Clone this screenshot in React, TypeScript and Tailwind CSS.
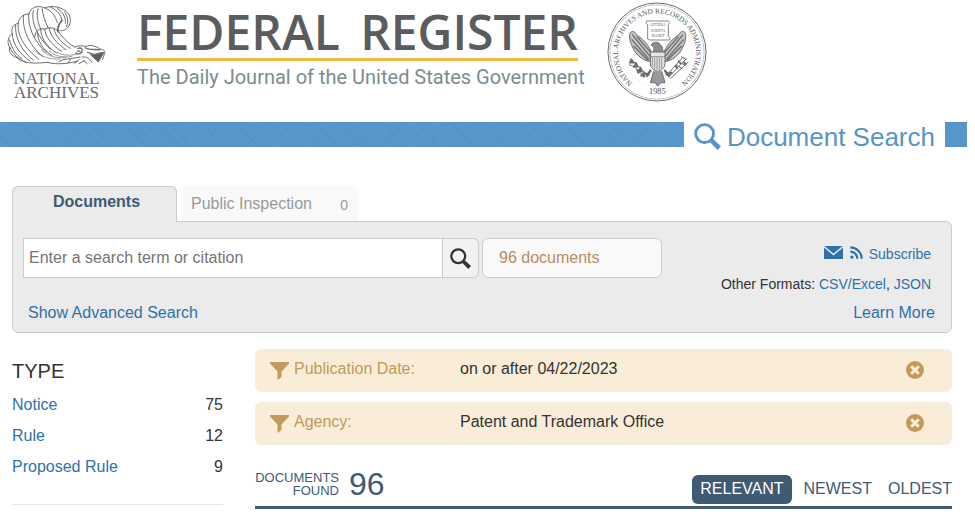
import React, { useState } from "react";

const types = [
  { label: "Notice", count: 75 },
  { label: "Rule", count: 12 },
  { label: "Proposed Rule", count: 9 },
];

const sortOptions = ["RELEVANT", "NEWEST", "OLDEST"];

const SearchIcon = ({ className }: { className?: string }) => (
  <svg viewBox="0 0 26 26" className={className} aria-hidden="true">
    <circle cx="10.2" cy="10.2" r="8.6" fill="none" stroke="currentColor" strokeWidth="2.8" />
    <path d="M15.2 18.2 18.2 15.2 26 22.4 22.6 26Z" fill="currentColor" />
  </svg>
);

const EagleLogo = () => (
  <svg viewBox="18 15 303 184" className="w-[101px] h-[61px]" fill="none" stroke="#6b6c6e" strokeWidth="3" strokeLinecap="round" aria-hidden="true">
    <path d="M86 42C90 22 114 14 134 24C158 14 190 22 206 42C216 58 212 82 194 90C186 94 176 92 176 92" />
    <path d="M134 24C152 30 166 46 172 68" />
    <path d="M152 22C172 30 184 46 186 62" />
    <path d="M172 26C190 36 198 52 196 70" />
    <path d="M194 36C204 50 206 64 200 80" />
    <path d="M186 62C178 70 172 82 174 96" strokeWidth="5" />
    <path d="M86 42C68 42 56 54 54 70C38 74 32 86 36 102C22 112 20 128 28 142C24 158 34 168 50 174" />
    <path d="M86 42C82 74 98 122 138 158" />
    <path d="M100 32C92 60 106 104 150 148" />
    <path d="M114 26C108 44 112 66 122 88" />
    <path d="M126 26C128 44 134 62 144 84" />
    <path d="M70 46C66 84 82 132 128 170" />
    <path d="M54 70C50 104 72 146 116 178" />
    <path d="M46 76C44 112 62 152 100 182" />
    <path d="M36 102C38 132 56 162 90 184" />
    <path d="M28 142C38 164 54 178 76 188" />
    <path d="M28 120C34 146 46 164 66 178" />
    <path d="M50 174C68 192 104 192 142 188" />
    <path d="M104 112C104 92 118 84 134 88C152 78 172 86 180 102C196 120 206 134 226 142" />
    <path d="M112 96C112 122 126 148 156 168" />
    <path d="M122 88C122 112 138 140 170 160" />
    <path d="M134 88C136 110 152 134 184 154" />
    <path d="M148 86C150 106 168 130 198 150" />
    <path d="M162 88C166 108 182 128 212 146" />
    <path d="M102 150C118 170 150 180 180 178M124 150C144 170 168 176 198 174M148 154C166 170 188 174 216 170M172 158C190 168 206 168 230 164" strokeWidth="2" />
    <path d="M142 188C168 196 206 192 232 184M176 186C190 176 214 178 240 172M204 190L212 178M222 192L238 180M238 192L254 182" />
    <path d="M226 142C234 136 250 138 258 140C270 134 290 138 300 148C312 148 318 154 314 164L308 180" />
    <path d="M234 146C244 142 250 148 246 156C240 164 232 164 228 160M232 154H240" strokeWidth="4" />
    <path d="M256 144C268 152 286 148 300 150" strokeWidth="4" />
    <path d="M262 158L286 164C294 160 302 158 312 158" />
    <path d="M274 166L312 160L296 186Z" fill="#5b5c5e" />
    <path d="M246 172C262 170 270 176 276 188M252 184L262 192M268 158L274 166" />
  </svg>
);

const Seal = () => (
  <svg viewBox="0 0 300 300" className="size-[100px]" fill="none" stroke="#6b6c6e" aria-label="National Archives and Records Administration seal">
    <defs>
      <path id="seal-top" d="M94 254A117 117 0 1 1 206 254" />
    </defs>
    <circle cx="150" cy="150" r="147" strokeWidth="3" />
    <circle cx="150" cy="150" r="141" strokeWidth="2.5" strokeDasharray="2 2" />
    <circle cx="150" cy="150" r="103" strokeWidth="1.5" strokeDasharray="2 3" opacity=".35" />
    <text fill="#58595b" stroke="none" fontSize="22" fontFamily="Liberation Serif, serif">
      <textPath href="#seal-top" startOffset="50%" textAnchor="middle">
        NATIONAL ARCHIVES AND RECORDS ADMINISTRATION
      </textPath>
    </text>
    <text x="151" y="277" fill="#58595b" stroke="none" fontSize="25" textAnchor="middle" fontFamily="Liberation Serif, serif">1985</text>
    <path d="M120 57H184Q192 61 184 68V103Q192 108 188 114H128Q118 112 122 104V68Q114 66 120 57Z" fill="#fff" strokeWidth="2.5" />
    <g fill="#58595b" stroke="none" fontSize="11" textAnchor="middle" fontFamily="Liberation Serif, serif">
      <text x="153" y="73">LITTERA</text>
      <text x="153" y="89">SCRIPTA</text>
      <text x="153" y="105">MANET</text>
    </g>
    <g strokeWidth="3">
      <path d="M68 98C70 84 84 86 88 98C104 108 122 124 132 148L130 178C110 178 86 158 78 138C72 126 66 112 68 98Z" fill="#c4c5c6" />
      <path d="M236 98C234 84 220 86 216 98C200 108 182 124 172 148L174 178C194 178 218 158 226 138C232 126 238 112 236 98Z" fill="#c4c5c6" />
      <path d="M76 98L130 164M74 112L126 172M80 132L124 176M90 104L132 152M228 98L174 164M230 112L178 172M224 132L180 176M214 104L172 152" strokeWidth="4" />
      <path d="M138 150C144 140 140 132 132 130C138 118 154 118 160 128C168 134 166 144 170 152" fill="#8b8c8e" />
      <path d="M130 150H174V184C174 198 162 206 152 210C142 206 130 198 130 184Z" fill="#e5e5e5" />
      <path d="M136 166V194M143 166V202M150 166V208M157 166V206M164 166V200M130 164H174" strokeWidth="2" />
      <path d="M132 204L118 224M172 204L188 224M128 218L112 214M176 218L196 212" strokeWidth="7" />
      <path d="M140 208L130 242H144L152 252L162 242H174L164 208" fill="#98999b" />
      <path d="M68 172C86 182 104 200 122 224M66 188C84 192 100 210 112 228" />
      <path d="M72 170l8 12-14 0M86 180l6 14-14 0M100 194l4 14-14 0M88 204l14 2-10 8M110 208l2 14-12-2" fill="#77787a" strokeWidth="5" />
      <path d="M184 226L238 170M180 218L228 166M190 230L244 180M222 164L238 172M218 182L236 190M206 188L226 200" strokeWidth="3" />
      <path d="M214 176l8 10M204 190l8 10M230 180l8 8" strokeWidth="6" />
    </g>
  </svg>
);

const MailIcon = () => (
  <svg viewBox="0 0 19 13" className="w-[19px] h-[13px]" aria-hidden="true">
    <path d="M0 0H19V13H0Z" fill="currentColor" />
    <path d="M0 .6 9.5 8.6 19 .6" fill="none" stroke="#ebebeb" strokeWidth="1.4" />
  </svg>
);

const RssIcon = () => (
  <svg viewBox="0 0 13 13" className="size-[13px]" fill="none" stroke="currentColor" strokeWidth="2.2" aria-hidden="true">
    <circle cx="1.9" cy="11.1" r="1.7" fill="currentColor" stroke="none" />
    <path d="M.3 5.6A7 7 0 0 1 7.3 12.8M.3 1.4A11.4 11.4 0 0 1 11.7 12.8" />
  </svg>
);

const FilterIcon = () => (
  <svg viewBox="0 0 19 18" className="w-[19px] h-[18px] shrink-0" fill="currentColor" aria-hidden="true">
    <path d="M0 0H19V1.5L11.5 9.5V15L7.5 18V9.5L0 1.5Z" />
  </svg>
);

const RemoveIcon = () => (
  <svg viewBox="0 0 18 18" className="size-[18px]" aria-hidden="true">
    <circle cx="9" cy="9" r="9" fill="currentColor" />
    <path d="M5.2 5.2 12.8 12.8M12.8 5.2 5.2 12.8" stroke="#f9edd7" strokeWidth="3" />
  </svg>
);

const FilterRow = ({ label, value }: { label: string; value: string }) => (
  <div className="flex items-center h-[43px] rounded-md bg-[#f9edd7] pl-[15px] pr-7 pb-0.5">
    <div className="flex items-start w-[190px] text-[#c29b5b]">
      <span className="pt-[3px]">
        <FilterIcon />
      </span>
      <span className="pl-[5px] pb-0.5">{label}</span>
    </div>
    <span className="flex-1 pb-0.5">{value}</span>
    <button type="button" aria-label={`Remove ${label}`} className="text-[#c29b5b]">
      <RemoveIcon />
    </button>
  </div>
);

const App = () => {
  const [term, setTerm] = useState("");
  const [sort, setSort] = useState("RELEVANT");

  return (
    <div className="bg-white text-[#333] text-base leading-5 font-['Liberation_Sans',Arial,sans-serif]">
      <header className="flex items-start h-[122px] pl-1.5">
        <a href="#" className="flex flex-col items-center w-[101px] pt-[5px] text-[17px] leading-[14px] text-[#6b6c6e] font-['Liberation_Serif',serif]">
          <EagleLogo />
          <span className="pt-1.5">NATIONAL</span>
          <span>ARCHIVES</span>
        </a>
        <a href="#" className="flex flex-col w-[441px] ml-[30px] pt-2">
          <span className="flex justify-between border-b-3 border-[#f3b73e] pb-0.5 text-[48px] leading-[48px] font-semibold text-[#5b5c5e] font-['Open_Sans',sans-serif]">
            <span>FEDERAL</span>
            <span>REGISTER</span>
          </span>
          <span className="pt-1 text-xl leading-6 text-[#7a8c91] whitespace-nowrap font-['Roboto',sans-serif]">
            The Daily Journal of the United States Government
          </span>
        </a>
        <div className="ml-[29px] pt-[2px]">
          <Seal />
        </div>
      </header>

      <div className="flex justify-end items-center h-[25px] mr-2 pr-[22px] bg-[#5897cc] bg-[repeating-linear-gradient(45deg,transparent_0_7px,#4a88bf59_7px_8px),repeating-linear-gradient(-45deg,transparent_0_15px,#4a88bf33_15px_16px)]">
        <h1 className="flex items-center gap-1.5 bg-white px-2.5 pt-1.5 pb-0.5 text-[26px] leading-8 text-[#5694ca]">
          <SearchIcon className="size-[27px]" />
          Document Search
        </h1>
      </div>

      <main className="pt-[39px] pl-3 pr-[23px]">
        <nav className="flex items-end gap-1">
          <a href="#" className="relative z-10 -mb-px w-[165px] h-9 pt-[5px] pl-1 border border-b-0 border-[#ccc] rounded-t-md bg-[#ebebeb] text-center font-bold text-[#3f5a73]">
            Documents
          </a>
          <a href="#" className="flex items-center justify-between w-[177px] h-[35px] px-2.5 rounded-t-md bg-[#f9f9f9] text-[#999]">
            <span>Public Inspection</span>
            <span className="text-sm pt-0.5">0</span>
          </a>
        </nav>

        <section className="border border-[#ccc] rounded-md rounded-tl-none bg-[#ebebeb] pt-4 pb-[9px] pl-2.5 pr-4">
          <div className="flex">
            <form className="flex w-[456px] h-10" onSubmit={(e: any) => e.preventDefault()}>
              <input
                type="text"
                aria-label="Search documents"
                placeholder="Enter a search term or citation"
                value={term}
                onChange={(e: any) => setTerm(e.target.value)}
                className="flex-1 border border-[#ccc] bg-white px-[5px] placeholder:text-[#757575]"
              />
              <button type="submit" aria-label="Search" className="flex items-center justify-center w-9 border border-l-0 border-[#ccc] rounded-r-md bg-[#f2f2f2]">
                <SearchIcon className="size-[21px]" />
              </button>
            </form>
            <div className="flex items-center w-[180px] h-10 ml-[3px] pl-4 border border-[#ccc] rounded-md bg-[#f9f9f9] text-[#b98c63]">
              96 documents
            </div>
            <div className="flex-1 flex flex-col items-end pt-1.5 pr-1 text-sm leading-5">
              <a href="#" className="flex items-start gap-1.5 text-[#3071a9]">
                <span className="flex gap-[7px] pt-0.5">
                  <MailIcon />
                  <RssIcon />
                </span>
                Subscribe
              </a>
              <p className="pt-2.5">
                Other Formats: <a href="#" className="text-[#3071a9]">CSV/Excel</a>, <a href="#" className="text-[#3071a9]">JSON</a>
              </p>
            </div>
          </div>
          <div className="flex justify-between pt-[9px] pl-[5px] text-[#3071a9]">
            <a href="#">Show Advanced Search</a>
            <a href="#">Learn More</a>
          </div>
        </section>

        <div className="flex gap-8 pt-4">
          <aside className="w-[211px] shrink-0 pt-2.5">
            <h2 className="text-xl leading-6 pb-3">TYPE</h2>
            <ul className="flex flex-col gap-[11px] pb-[27px] border-b border-[#e5e5e5]">
              {types.map((type) => (
                <li key={type.label} className="flex justify-between">
                  <a href="#" className="text-[#3071a9]">{type.label}</a>
                  <span>{type.count}</span>
                </li>
              ))}
            </ul>
          </aside>

          <div className="flex-1">
            <div className="flex flex-col gap-2.5">
              <FilterRow label="Publication Date:" value="on or after 04/22/2023" />
              <FilterRow label="Agency:" value="Patent and Trademark Office" />
            </div>
            <div className="flex items-end justify-between mt-[23px] border-b-3 border-[#3f5a73] text-[#3f5a73]">
              <div className="flex items-center gap-2.5 pb-1.5">
                <p className="w-[84px] text-[13px] leading-[13px] text-right">DOCUMENTS FOUND</p>
                <span className="text-[32px] leading-8">96</span>
              </div>
              <div className="flex pb-0.5 gap-1">
                {sortOptions.map((option) => (
                  <button
                    type="button"
                    key={option}
                    onClick={() => setSort(option)}
                    className={
                      option === sort
                        ? "h-[29px] px-2 pb-0.5 rounded-md bg-[#3f5a73] text-white"
                        : "h-[29px] pl-2 pr-1 pb-0.5 last:pr-0"
                    }
                  >
                    {option}
                  </button>
                ))}
              </div>
            </div>
          </div>
        </div>
      </main>
    </div>
  );
};

export default App;
